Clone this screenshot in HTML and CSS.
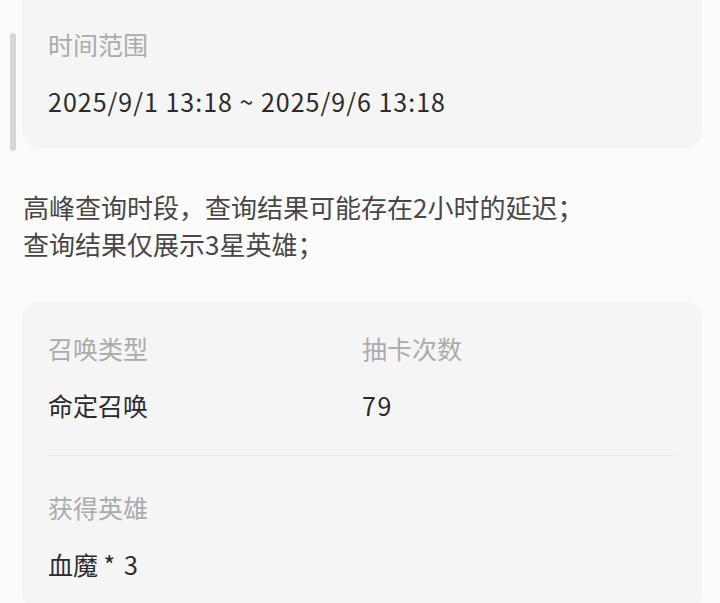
FILE: index.html
```html
<!DOCTYPE html>
<html lang="zh-CN">
<head>
  <meta charset="UTF-8" />
  <meta name="viewport" content="width=device-width, initial-scale=1.0"/>
  <title>召唤记录</title>
  <link rel="stylesheet" href="styles.css">
</head>
<body>
  <!-- Barra de desplazamiento -->
  <div class="scroll-thumb"></div>

  <div class="page">
    <!-- Rango de tiempo -->
    <div class="card card-top">
      <div class="field">
        <div class="label">时间范围</div>
        <div class="value value-date">2025/9/1 13:18 ~ 2025/9/6 13:18</div>
      </div>
    </div>

    <p class="notes">
      高峰查询时段，查询结果可能存在2小时的延迟；<br>
      查询结果仅展示3星英雄；
    </p>

    <!-- Registro -->
    <div class="card">
      <div class="row">
        <div class="field">
          <div class="label">召唤类型</div>
          <div class="value">命定召唤</div>
        </div>
        <div class="field">
          <div class="label">抽卡次数</div>
          <div class="value value-num">79</div>
        </div>
      </div>
      <div class="divider"></div>
      <div class="field">
        <div class="label">获得英雄</div>
        <div class="value">血魔 <span class="value-num">* 3</span></div>
      </div>
    </div>
  </div>
</body>
</html>
```

FILE: styles.css
```css
body {
  font-family: "Noto Sans CJK SC", "Noto Sans", sans-serif;
  background-color: #fbfbfb;
  margin: 0;
  overflow: hidden;
}

.page {
  padding: 0 18px 0 22px;
}

.scroll-thumb {
  position: absolute;
  top: 33px;
  left: 10px;
  width: 6px;
  height: 118px;
  border-radius: 3px;
  background-color: #d6d6d6;
}

.card {
  background-color: #f5f5f5;
  border-radius: 18px;
  padding: 30px 26px;
}

.card-top {
  padding-top: 27px;
  border-radius: 0 0 18px 18px;
}

.row {
  display: grid;
  grid-template-columns: 1fr 1fr;
}

.label {
  font-size: 25px;
  line-height: 34px;
  color: #ababab;
}

.value {
  margin-top: 23px;
  font-size: 25px;
  line-height: 34px;
  color: #2b2b2b;
}

.value-date {
  letter-spacing: 1px;
}

.value-num {
  letter-spacing: 1.5px;
}

.divider {
  height: 1px;
  background-color: #e8e8e8;
  margin: 33px 0 34px;
}

.notes {
  margin: 40px 0 39px 1px;
  font-size: 26px;
  line-height: 37px;
  color: #474747;
}
```
